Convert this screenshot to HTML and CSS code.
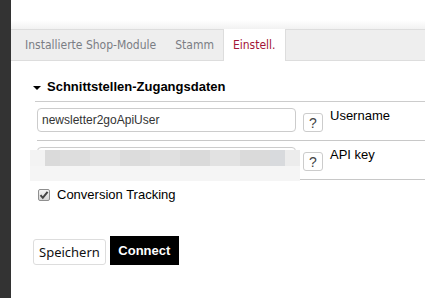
FILE: index.html
```html
<!DOCTYPE html>
<html lang="de">
<head>
<meta charset="utf-8">
<title>Einstellungen</title>
<link rel="stylesheet" href="styles.css">
</head>
<body>
<div class="app">
  <div class="sidebar"></div>
  <div class="main">
    <div class="topbar"></div>
    <div class="tabs">
      <div class="tab">Installierte Shop-Module</div>
      <div class="tab">Stamm</div>
      <div class="tab active">Einstell.</div>
    </div>
    <div class="section">
      <div class="heading"><span class="caret"></span>Schnittstellen-Zugangsdaten</div>
      <div class="row">
        <div class="field"><input class="input" type="text" value="newsletter2goApiUser"></div>
        <button class="help" type="button">?</button>
        <div class="label">Username</div>
      </div>
      <div class="row">
        <div class="field">
          <input class="input" type="text" value="">
          <div class="blur"><div class="blur-top"></div><div class="blur-bottom"></div></div>
        </div>
        <button class="help" type="button">?</button>
        <div class="label">API key</div>
      </div>
      <label class="check">
        <span class="box"><svg width="10" height="10" viewBox="0 0 10 10"><path d="M1.5 5.2 L3.8 7.8 L8.6 1.8" fill="none" stroke="#444" stroke-width="2"/></svg></span>
        Conversion Tracking
      </label>
      <div class="actions">
        <button class="btn save" type="button">Speichern</button>
        <button class="btn connect" type="button">Connect</button>
      </div>
    </div>
  </div>
</div>
</body>
</html>
```
FILE: styles.css
```css
* { box-sizing: border-box; }
html, body { margin: 0; padding: 0; background: #fff; }
body { font-family: "Liberation Sans", Arial, sans-serif; color: #000; }
.app { display: flex; width: 425px; height: 298px; overflow: hidden; }
.sidebar { width: 11px; background: #333; flex: none; }
.main { flex: 1; display: flex; flex-direction: column; }
.topbar { height: 29px; background: linear-gradient(#fff 0, #fff 20px, #f2f2f2 29px); }
.tabs {
  display: flex;
  height: 32px;
  padding-left: 4px;
  background: #eee;
  border-top: 1px solid #ddd;
  border-bottom: 1px solid #ddd;
}
.tab {
  padding: 0 9px 0 10px;
  font-family: "DejaVu Sans Condensed", "DejaVu Sans", sans-serif;
  font-size: 12px;
  line-height: 30px;
  color: #7a7d84;
}
.tab.active {
  background: #fff;
  color: #a31538;
  margin-top: -1px;
  margin-bottom: -1px;
  line-height: 32px;
  border-left: 1px solid #ddd;
  border-right: 1px solid #ddd;
  padding: 0 9px;
}
.section { display: flex; flex-direction: column; }
.heading {
  margin: 18px 0 0 24px;
  padding-bottom: 6px;
  line-height: 16px;
  font-size: 13px;
  font-weight: bold;
  border-bottom: 1px solid #ccc;
  display: flex;
  align-items: center;
}
.caret {
  width: 0; height: 0;
  border-left: 4px solid transparent;
  border-right: 4px solid transparent;
  border-top: 4px solid #000;
  margin: 1px 6px 0 -2px;
}
.row {
  display: flex;
  align-items: flex-start;
  margin-left: 26px;
  padding: 6px 0 8px;
  border-bottom: 1px solid #c8c8c8;
}
.field { position: relative; width: 259px; height: 24px; flex: none; }
.input {
  width: 100%;
  height: 24px;
  border: 1px solid #ccc;
  border-radius: 4px;
  padding: 0 4px;
  font-family: "Liberation Sans", Arial, sans-serif;
  font-size: 12px;
  color: #333;
  background: #fff;
  outline: none;
}
.blur {
  position: absolute;
  left: -7px; top: 3px;
  width: 270px; height: 31px;
  display: flex; flex-direction: column;
}
.blur-top {
  height: 16px;
  background: linear-gradient(90deg,
    #f3f3f3 0, #f3f3f3 15px,
    #dadada 15px, #dadada 30px,
    #dddddd 30px, #dddddd 60px,
    #e3e3e3 60px, #e3e3e3 90px,
    #dcdcdc 90px, #dcdcdc 120px,
    #e0e0e0 120px, #e0e0e0 150px,
    #dadada 150px, #dadada 180px,
    #e2e2e2 180px, #e2e2e2 210px,
    #dadada 210px, #dadada 240px,
    #d8dadd 240px, #d8dadd 255px,
    #ececec 255px, #ececec 270px);
}
.blur-bottom { flex: 1; background: #f5f5f5; }
.help {
  width: 20px; height: 19px;
  margin: 5px 0 0 7px;
  padding: 1px 0 0;
  border: 1px solid #ccc;
  border-radius: 3px;
  background: #fff;
  color: #444;
  font-family: "Liberation Sans", Arial, sans-serif;
  font-size: 14px;
  font-weight: normal;
  line-height: 17px;
  flex: none;
}
.label { margin-left: 7px; font-size: 13px; line-height: 16px; }
.check {
  display: flex;
  align-items: center;
  margin: 7px 0 0 27px;
  font-size: 13px;
  line-height: 16px;
}
.box {
  width: 12px; height: 12px;
  border: 1px solid #8f8f8f;
  border-radius: 2px;
  background: linear-gradient(#f4f4f4, #d6d6d6);
  display: flex; align-items: center; justify-content: center;
  margin-right: 7px;
}
.actions {
  display: flex;
  align-items: flex-end;
  gap: 4px;
  margin: 33px 0 0 22px;
}
.btn { cursor: pointer; }
.save {
  height: 26px;
  padding: 0 5px;
  border: 1px solid #ddd;
  border-radius: 3px;
  background: #fff;
  color: #111;
  font-family: "Noto Sans", sans-serif;
  font-size: 13px;
}
.connect {
  height: 29px;
  width: 69px;
  border: none;
  background: #000;
  color: #fff;
  font-family: "Liberation Sans", Arial, sans-serif;
  font-size: 13px;
  font-weight: bold;
}
```
